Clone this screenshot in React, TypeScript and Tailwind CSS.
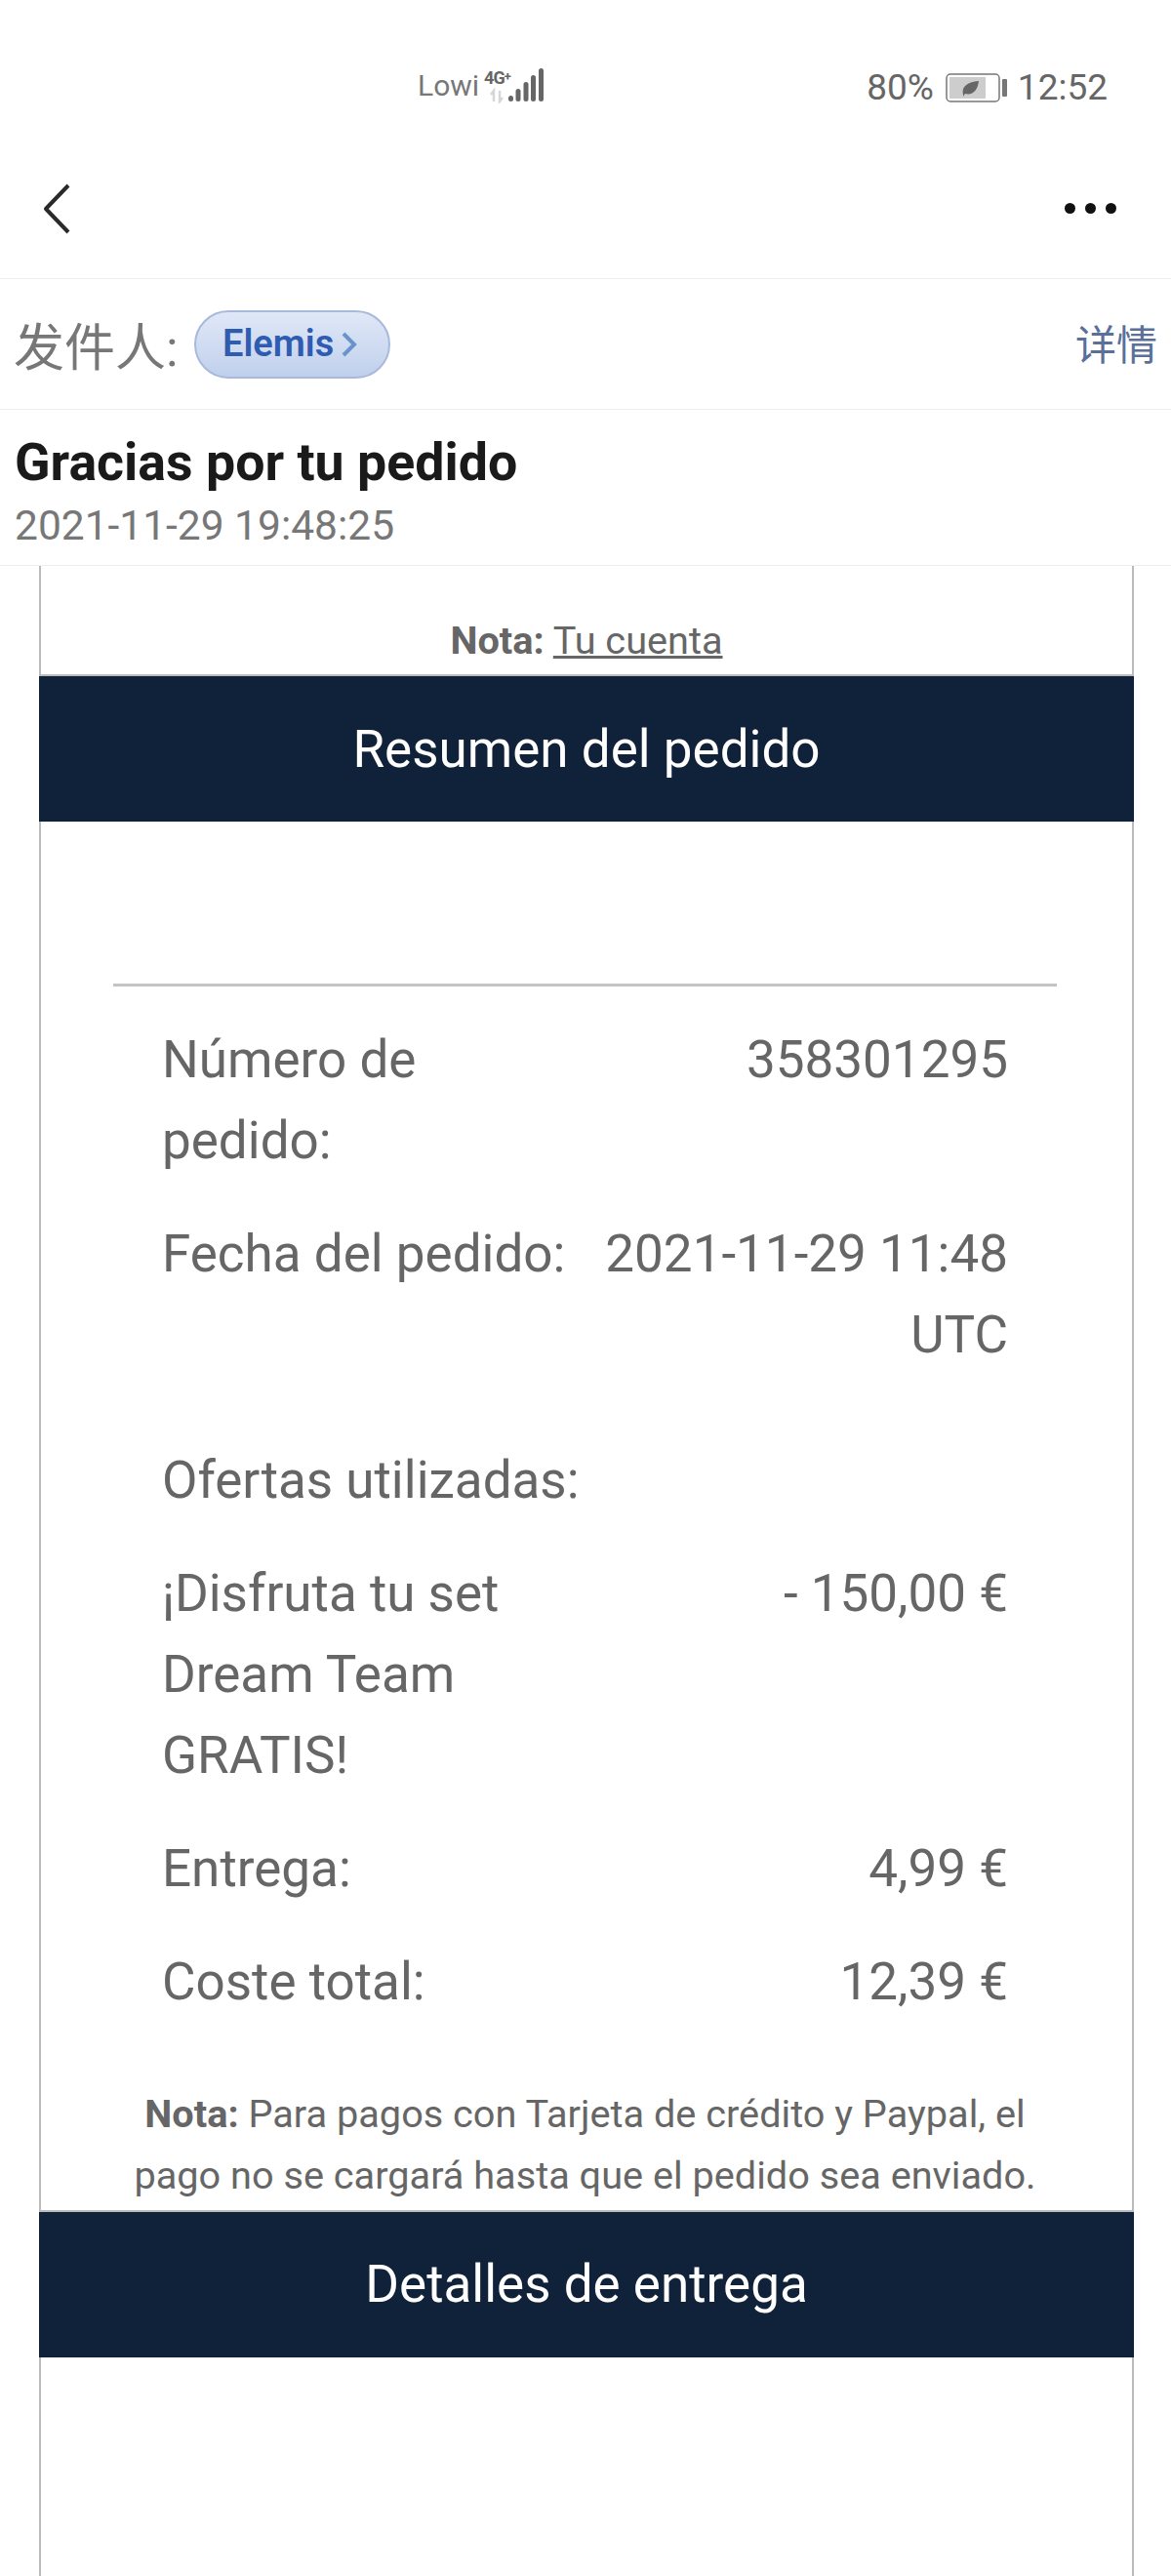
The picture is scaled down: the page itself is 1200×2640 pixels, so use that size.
const roboto = { fontFamily: 'Roboto, "Noto Sans CJK SC", sans-serif' };

const rows = [
  { label: 'Número de pedido:', value: '358301295' },
  { label: 'Fecha del pedido:', value: '2021-11-29 11:48 UTC', extra: true },
  { label: 'Ofertas utilizadas:', value: '' },
  { label: '¡Disfruta tu set Dream Team GRATIS!', value: '- 150,00 €' },
  { label: 'Entrega:', value: '4,99 €' },
  { label: 'Coste total:', value: '12,39 €' },
];

function SignalIcon() {
  return (
    <div className="relative ml-[5px] h-[36px] w-[64px]">
      <span className="absolute left-0 top-[1px] text-[18px] font-bold leading-[18px] tracking-[-1px] text-[#666]">
        4G<span className="relative top-[-3px] text-[13px]">+</span>
      </span>
      <svg width="64" height="36" viewBox="0 0 64 36" className="block">
        <path d="M10 34V23l-3 4M16 23v11l3-4" stroke="#d6d6d6" strokeWidth="2.5" fill="none" />
        <rect x="25" y="28" width="5" height="6" rx="2.5" fill="#666" />
        <rect x="32.5" y="21" width="5" height="13" rx="2.5" fill="#666" />
        <rect x="40.5" y="14" width="5" height="20" rx="2.5" fill="#666" />
        <rect x="48" y="7" width="5" height="27" rx="2.5" fill="#666" />
        <rect x="56" y="0" width="5" height="34" rx="2.5" fill="#666" />
      </svg>
    </div>
  );
}

function BatteryIcon() {
  return (
    <svg width="63" height="30" viewBox="0 0 63 30" className="block">
      <rect x="1" y="1" width="54" height="28" rx="4" fill="none" stroke="#777" strokeWidth="1.5" />
      <rect x="4" y="4" width="37" height="22" fill="#cdcdcd" />
      <path d="M18 22c-2-8 4-13 16-14-1 9-6 15-14 13l-2 3z" fill="#666" />
      <rect x="58" y="6" width="5" height="18" rx="1" fill="#777" />
    </svg>
  );
}

export default function App() {
  return (
    <div className="flex h-[2640px] w-[1200px] flex-col overflow-hidden bg-white" style={roboto}>
      <div className="flex h-[120px] shrink-0 items-start justify-between pl-[428px] pr-[65px] pt-[70px]">
        <div className="flex items-start">
          <span className="text-[30px] leading-[35px] text-[#777]">Lowi</span>
          <SignalIcon />
        </div>
        <div className="flex items-center text-[37px] leading-[40px] text-[#666]">
          <span>80%</span>
          <span className="ml-[12px]"><BatteryIcon /></span>
          <span className="ml-[11px]">12:52</span>
        </div>
      </div>

      <div className="flex h-[165px] shrink-0 items-center justify-between pl-[44px] pr-[56px] pt-[22px]">
        <svg width="28" height="52" viewBox="0 0 28 52" fill="none">
          <path d="M26 2 3 26l23 24" stroke="#2a2a2a" strokeWidth="4" strokeLinejoin="round" />
        </svg>
        <div className="flex gap-[10px]">
          <span className="size-[11px] rounded-full bg-[#111]" />
          <span className="size-[11px] rounded-full bg-[#111]" />
          <span className="size-[11px] rounded-full bg-[#111]" />
        </div>
      </div>

      <div className="flex h-[135px] shrink-0 items-center justify-between border-y border-[#eeeeee] pl-[14px] pr-[14px]">
        <div className="flex items-center">
          <span className="mt-[10px] text-[52px] leading-[56px] text-[#777]">发件人:</span>
          <span className="ml-[16px] flex h-[70px] w-[201px] items-center justify-center rounded-full border-2 border-[#a9b9dc] bg-gradient-to-b from-[#e0e8f7] to-[#c0d0ec] pr-[4px] text-[38px] font-semibold text-[#2f5bb0]">
            Elemis
            <svg width="16" height="26" viewBox="0 0 16 26" fill="none" className="ml-[8px]">
              <path d="M2 2l11 11L2 24" stroke="#6a93cc" strokeWidth="4" />
            </svg>
          </span>
        </div>
        <span className="mt-[4px] text-[42px] text-[#5a7099]">详情</span>
      </div>

      <div className="h-[160px] shrink-0 border-b border-[#eeeeee] pl-[15px] pt-[24px]">
        <div className="text-[53.7px] font-bold leading-[60px] text-[#1a1a1a]">Gracias por tu pedido</div>
        <div className="mt-[5px] text-[42.5px] leading-[60px] text-[#777]">2021-11-29 19:48:25</div>
      </div>

      <div className="ml-[40px] mr-[38px] flex flex-1 flex-col border-x-2 border-[#bbbbbb] text-[#666]">
        <div className="h-[113px] border-b-2 border-[#bbbbbb] pt-[47px] text-center text-[39.7px] leading-[60px]">
          <b className="font-bold">Nota:</b> <span className="underline decoration-[3px]">Tu cuenta</span>
        </div>
        <div className="-mx-[2px] flex h-[149px] shrink-0 items-center justify-center bg-[#10213a] pt-[2px] text-[53px] text-white">Resumen del pedido</div>

        <div className="ml-[74px] mr-[77px] mt-[166px] border-t-[3px] border-[#c4c4c4] px-[50px] pt-[18px] text-[53px] leading-[83px]">
          {rows.map((row) => (
            <div key={row.label} className={row.extra ? 'flex justify-between pb-[50px] pt-[16px]' : 'flex justify-between pb-[17px] pt-[16px]'}>
              <div className="w-[430px] shrink-0">{row.label}</div>
              <div className="text-right">{row.value}</div>
            </div>
          ))}
        </div>

        <div className="ml-[74px] mr-[77px] mt-[45px] text-center text-[39.7px] leading-[63px]">
          <b className="font-bold">Nota:</b> Para pagos con Tarjeta de crédito y Paypal, el pago no se cargará hasta que el pedido sea enviado.
        </div>
        <div className="mt-[4px] h-[2px] shrink-0 bg-[#bbbbbb]" />
        <div className="-mx-[2px] flex h-[149px] shrink-0 items-center justify-center bg-[#10213a] pt-[1px] text-[53px] text-white">Detalles de entrega</div>
      </div>
    </div>
  );
}
